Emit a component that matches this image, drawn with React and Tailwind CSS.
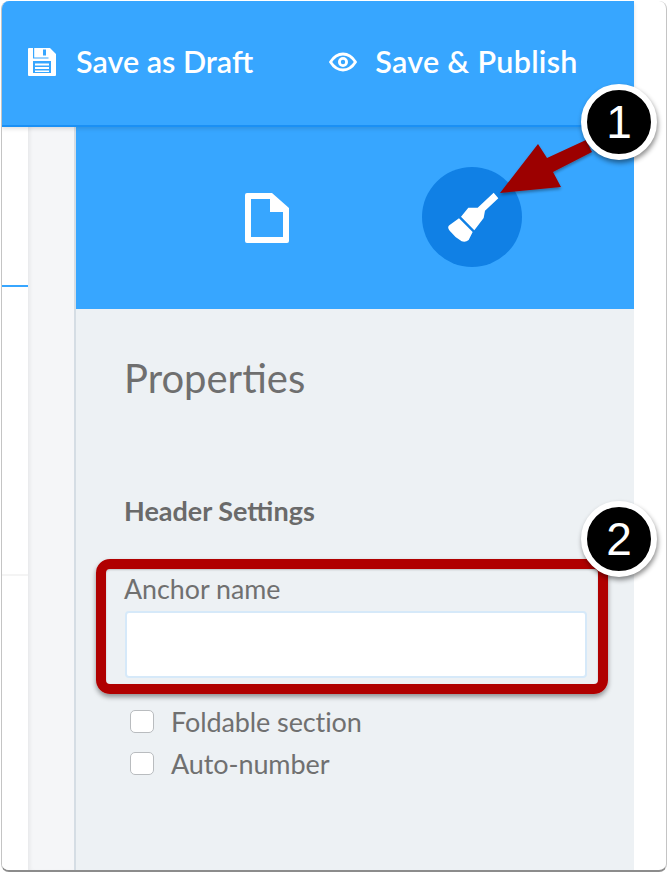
import React from "react";

function Floppy() {
  return (
    <svg viewBox="0 0 28 28" className="w-[28px] h-[28px] shrink-0">
      <path fillRule="evenodd" fill="#fff" d="M1 0H22L28 6V27a1 1 0 0 1-1 1H1a1 1 0 0 1-1-1V1a1 1 0 0 1 1-1ZM15 1.5V7.5H18V1.5ZM5 13V25H23V13Z" />
      <path fill="#fff" d="M7 15.5H21V17.5H7ZM7 19H21V21H7ZM7 22.5H21V24H7Z" />
      <path fill="#37a6ff" d="M5 0H6.2V9.5H5ZM5 9.5H20.5V10.5H5Z" />
    </svg>
  );
}

function Eye() {
  return (
    <svg viewBox="0 0 28 20" className="w-[28px] h-[20px] shrink-0" fill="none">
      <path d="M1.5 10C5 4.5 9.2 2 14 2s9 2.5 12.5 8C23 15.5 18.8 18 14 18S5 15.5 1.5 10Z" stroke="#fff" strokeWidth="2.8" strokeLinejoin="round" />
      <circle cx="14" cy="10" r="3.6" stroke="#fff" strokeWidth="2.8" />
    </svg>
  );
}

function FileIcon() {
  return (
    <svg viewBox="0 0 44 50" className="w-[44px] h-[50px] shrink-0">
      <path fillRule="evenodd" fill="#fff" d="M2 0H27L44 15V48a2 2 0 0 1-2 2H2a2 2 0 0 1-2-2V2a2 2 0 0 1 2-2ZM6 6V44H38V19H25V6Z" />
    </svg>
  );
}

function Brush() {
  return (
    <svg viewBox="-9 6 240 240" className="w-[80px] h-[80px]">
      <path fill="#fff" d="M176 53 190 70 150 107 146 129 118 166 78 125 100 98 128 98Z" />
      <path fill="#fff" d="M72 130 113 171 101 195Q92 203 80 199Q60 187 44 167Q35 156 44 150Z" />
    </svg>
  );
}

function Callout({ n, className }) {
  return (
    <div className={"absolute z-20 w-[76px] h-[76px] rounded-full bg-black border-[6px] border-white flex items-center justify-center shadow-[1px_3px_5px_rgba(0,0,0,0.45)] " + className}>
      <span className="text-white text-[46px] leading-none font-['Liberation_Sans',sans-serif]">{n}</span>
    </div>
  );
}

function Check({ label }) {
  return (
    <div className="flex items-center h-[23px] ml-[5px]">
      <div className="w-[24px] h-[23px] rounded-[5px] bg-white border border-[#b9bcbf] shrink-0" />
      <span className="ml-[17px] text-[27px] leading-none text-[#707070] tracking-[-0.1px]">{label}</span>
    </div>
  );
}

export default function App() {
  return (
    <div className="relative w-[668px] h-[874px] bg-white pt-px pl-px font-['Lato',sans-serif]">
      <div className="w-[666px] h-[871px] rounded-lg overflow-hidden border-l border-r border-b-2 border-[#c4c4c4] border-b-[#8c8c8c] bg-white">
        <div className="w-[632px] h-full flex flex-col">
          <header className="h-[126px] shrink-0 bg-[#37a6ff] border-b-2 border-[#1a90f5] flex items-center pl-[26px] pb-[3px] relative z-10 shadow-[0_2px_4px_rgba(0,0,0,0.12)]">
            <Floppy />
            <span className="ml-[20px] text-[30.5px] font-semibold text-white whitespace-nowrap">Save as Draft</span>
            <div className="ml-[76px]"><Eye /></div>
            <span className="ml-[18px] text-[30.5px] font-semibold text-white whitespace-nowrap tracking-[0.3px]">Save &amp; Publish</span>
          </header>
          <div className="flex-1 flex min-h-0">
            <div className="w-[26px] shrink-0 bg-white">
              <div className="h-[158px]" />
              <div className="h-[2px] bg-[#37a6ff]" />
              <div className="h-[287px]" />
              <div className="h-[2px] bg-[#f4f4f4]" />
            </div>
            <div className="w-[48px] shrink-0 bg-[#f5f6f8] border-r-2 border-[#d5dde4] shadow-[inset_4px_0_4px_-2px_rgba(0,0,0,0.06)]" />
            <div className="flex-1 bg-[#edf1f4] flex flex-col">
              <div className="h-[182px] shrink-0 bg-[#37a6ff] flex items-center pl-[169px]">
                <FileIcon />
                <div className="ml-[133px] mb-[2px] w-[100px] h-[100px] rounded-full bg-[#1080e5] flex items-center justify-center">
                  <Brush />
                </div>
              </div>
              <div className="pl-[49px] pr-[47px]">
                <h1 className="mt-[44px] text-[40px] leading-[50px] text-[#6f6f6f] font-normal -ml-px">Properties</h1>
                <h2 className="mt-[93px] text-[27px] leading-[30px] font-bold text-[#6a6a6a] -ml-px">Header Settings</h2>
                <div className="mt-[48px] text-[26.8px] leading-[30px] text-[#707070] -ml-px">Anchor name</div>
                <div className="mt-[7px] h-[67px] rounded-[4px] bg-white border-2 border-[#d6e9f9]" />
                <div className="mt-[32px] flex flex-col gap-[19px]">
                  <Check label="Foldable section" />
                  <Check label="Auto-number" />
                </div>
              </div>
            </div>
          </div>
        </div>
      </div>

      {/* annotations */}
      <div className="absolute z-20 left-[96px] top-[559px] w-[512px] h-[135px] rounded-[14px] border-[10px] border-[#b00000] shadow-[0_3px_5px_rgba(0,0,0,0.4),inset_0_1px_2px_rgba(0,0,0,0.2)]" />
      <svg className="absolute z-20 left-0 top-0 w-[668px] h-[874px] pointer-events-none" viewBox="0 0 668 874">
        <defs>
          <filter id="s" x="-20%" y="-20%" width="140%" height="140%">
            <feDropShadow dx="0" dy="2" stdDeviation="1.5" floodOpacity="0.35" />
          </filter>
        </defs>
        <path filter="url(#s)" fill="#9c0000" d="M500 193 538 144 547 158 586 140 592 152 553 172 561 187Z" />
      </svg>
      <Callout n="1" className="left-[581px] top-[84px]" />
      <Callout n="2" className="left-[581px] top-[501px]" />
    </div>
  );
}
